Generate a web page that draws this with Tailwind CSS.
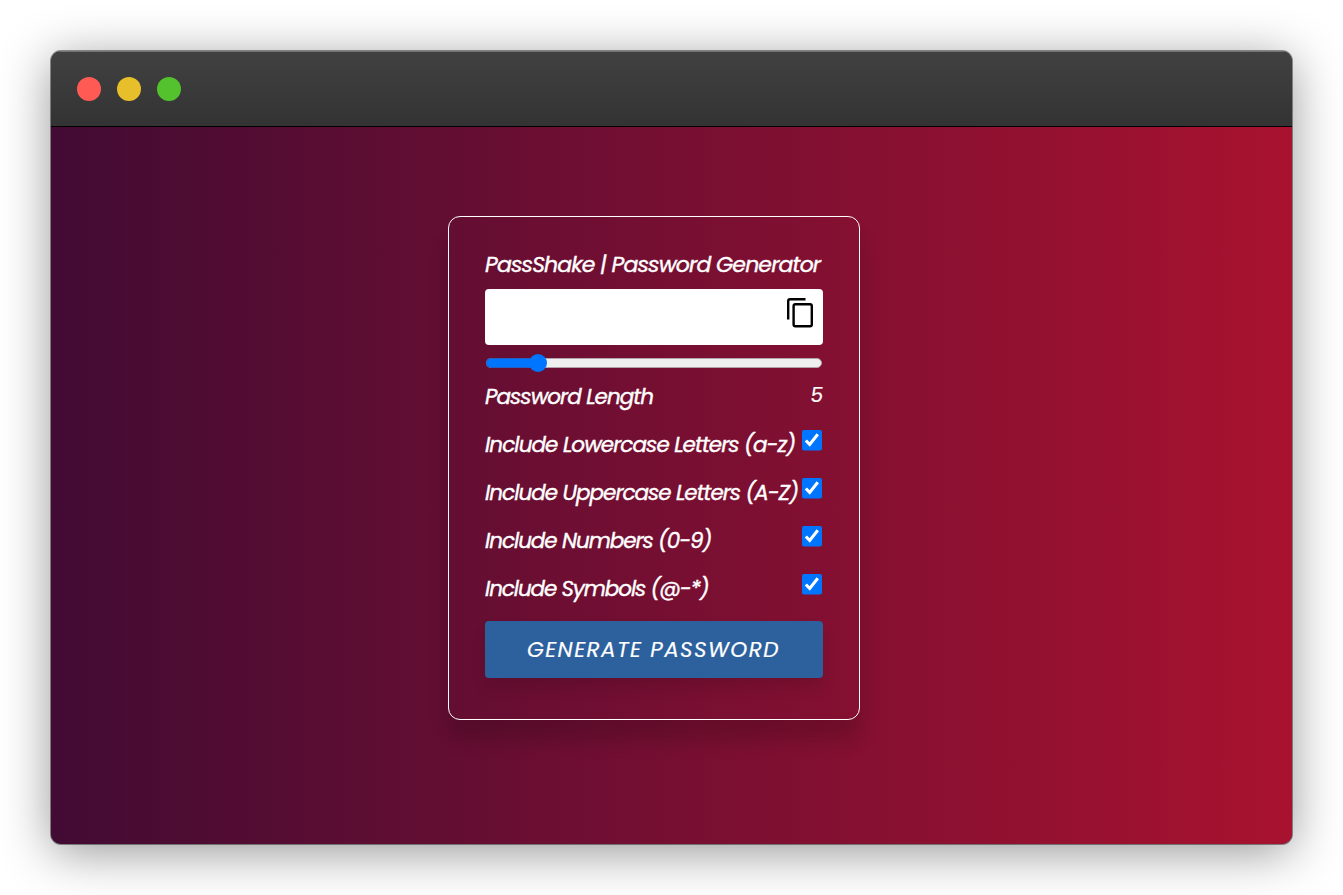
<!DOCTYPE html>
<html lang="en">
<head>
<meta charset="utf-8">
<title>PassShake | Password Generator</title>
<script src="https://cdn.jsdelivr.net/npm/@tailwindcss/browser@4"></script>
</head>
<body class="bg-white w-[1343px] h-[895px] overflow-hidden pt-[51px] pl-[51px]">
<div class="w-[1241px] h-[793px] rounded-[10px] overflow-hidden flex flex-col bg-[#3a3a3a] shadow-[0_0_0_1px_rgba(0,0,0,0.4),0_8px_50px_rgba(0,0,0,0.42)]">
  <header class="h-[76px] shrink-0 flex items-center gap-4 pl-[26px] bg-linear-to-b from-[#414141] to-[#333333] border-t border-t-[#757575] border-b border-b-black">
    <span class="size-6 rounded-full bg-[#ff5b54]"></span>
    <span class="size-6 rounded-full bg-[#e6bf2a]"></span>
    <span class="size-6 rounded-full bg-[#54c22d]"></span>
  </header>
  <main class="flex-1 bg-linear-to-r/srgb from-[#420b33] via-[#760f32] to-[#a8122f] pt-[89px] pl-[397px] font-[Poppins,Inter,sans-serif] italic text-white text-[21.5px]">
    <section class="w-[412px] h-[504px] rounded-[12px] border border-white px-9 pt-[31px] flex flex-col whitespace-nowrap shadow-[0_20px_20px_rgba(0,0,0,0.16)]">
      <h1 class="h-[33px] text-[22px] leading-[34px] tracking-[-0.86px] shrink-0 [-webkit-text-stroke:0.4px_white]">PassShake | Password Generator</h1>
      <div class="mt-2 h-14 shrink-0 rounded-[4px] bg-white flex justify-end pr-[9px] pt-2">
        <svg class="w-7 h-8" viewBox="0 0 28 32" fill="none" stroke="#000" stroke-width="2.4"><path d="M2.2 22.5V4Q2.2 2.2 4 2.2H19.5"/><rect x="7.6" y="7.2" width="18.2" height="22" rx="1.8"/></svg>
      </div>
      <div class="mt-[9px] h-[18px] shrink-0 flex items-center relative px-px">
        <div class="w-full h-[10px] rounded-full bg-[#efefef] border border-[#b2a3ab]"></div>
        <div class="absolute left-px w-[52px] h-[10px] rounded-l-full bg-[#0075ff] border border-[#2560c0] border-r-0"></div>
        <div class="absolute left-[44px] size-[18px] rounded-full bg-[#0075ff]"></div>
      </div>
      <div class="h-12 shrink-0 flex justify-between"><span class="leading-[50px] tracking-[-0.95px] [-webkit-text-stroke:0.4px_white]">Password Length</span><span class="text-[20px] leading-[47px] [-webkit-text-stroke:0.2px_white]">5</span></div>
      <div class="h-12 shrink-0 flex justify-between"><span class="leading-[50px] tracking-[-0.93px] [-webkit-text-stroke:0.4px_white]">Include Lowercase Letters (a-z)</span><svg class="mt-[9px] size-[22px] shrink-0" viewBox="0 0 22 22"><rect x="1" y="1" width="20" height="20.5" rx="2" fill="#0075ff"/><path d="M4.8 11.5L8.7 15.4L16.8 5.2" fill="none" stroke="#fff" stroke-width="3"/></svg></div>
      <div class="h-12 shrink-0 flex justify-between"><span class="leading-[50px] tracking-[-0.99px] [-webkit-text-stroke:0.4px_white]">Include Uppercase Letters (A-Z)</span><svg class="mt-[9px] size-[22px] shrink-0" viewBox="0 0 22 22"><rect x="1" y="1" width="20" height="20.5" rx="2" fill="#0075ff"/><path d="M4.8 11.5L8.7 15.4L16.8 5.2" fill="none" stroke="#fff" stroke-width="3"/></svg></div>
      <div class="h-12 shrink-0 flex justify-between"><span class="leading-[50px] tracking-[-1.06px] [-webkit-text-stroke:0.4px_white]">Include Numbers (0-9)</span><svg class="mt-[9px] size-[22px] shrink-0" viewBox="0 0 22 22"><rect x="1" y="1" width="20" height="20.5" rx="2" fill="#0075ff"/><path d="M4.8 11.5L8.7 15.4L16.8 5.2" fill="none" stroke="#fff" stroke-width="3"/></svg></div>
      <div class="h-12 shrink-0 flex justify-between"><span class="leading-[50px] tracking-[-1.12px] [-webkit-text-stroke:0.4px_white]">Include Symbols (@-*)</span><svg class="mt-[9px] size-[22px] shrink-0" viewBox="0 0 22 22"><rect x="1" y="1" width="20" height="20.5" rx="2" fill="#0075ff"/><path d="M4.8 11.5L8.7 15.4L16.8 5.2" fill="none" stroke="#fff" stroke-width="3"/></svg></div>
      <button class="mt-[9px] h-[57px] shrink-0 rounded-[4px] bg-[#2c619e] italic pl-[42px] pt-px text-left text-[21.5px] tracking-[1.42px] [-webkit-text-stroke:0.2px_white] shadow-[0_10px_15px_rgba(0,0,0,0.1)]">GENERATE PASSWORD</button>
    </section>
  </main>
</div>
</body>
</html>
